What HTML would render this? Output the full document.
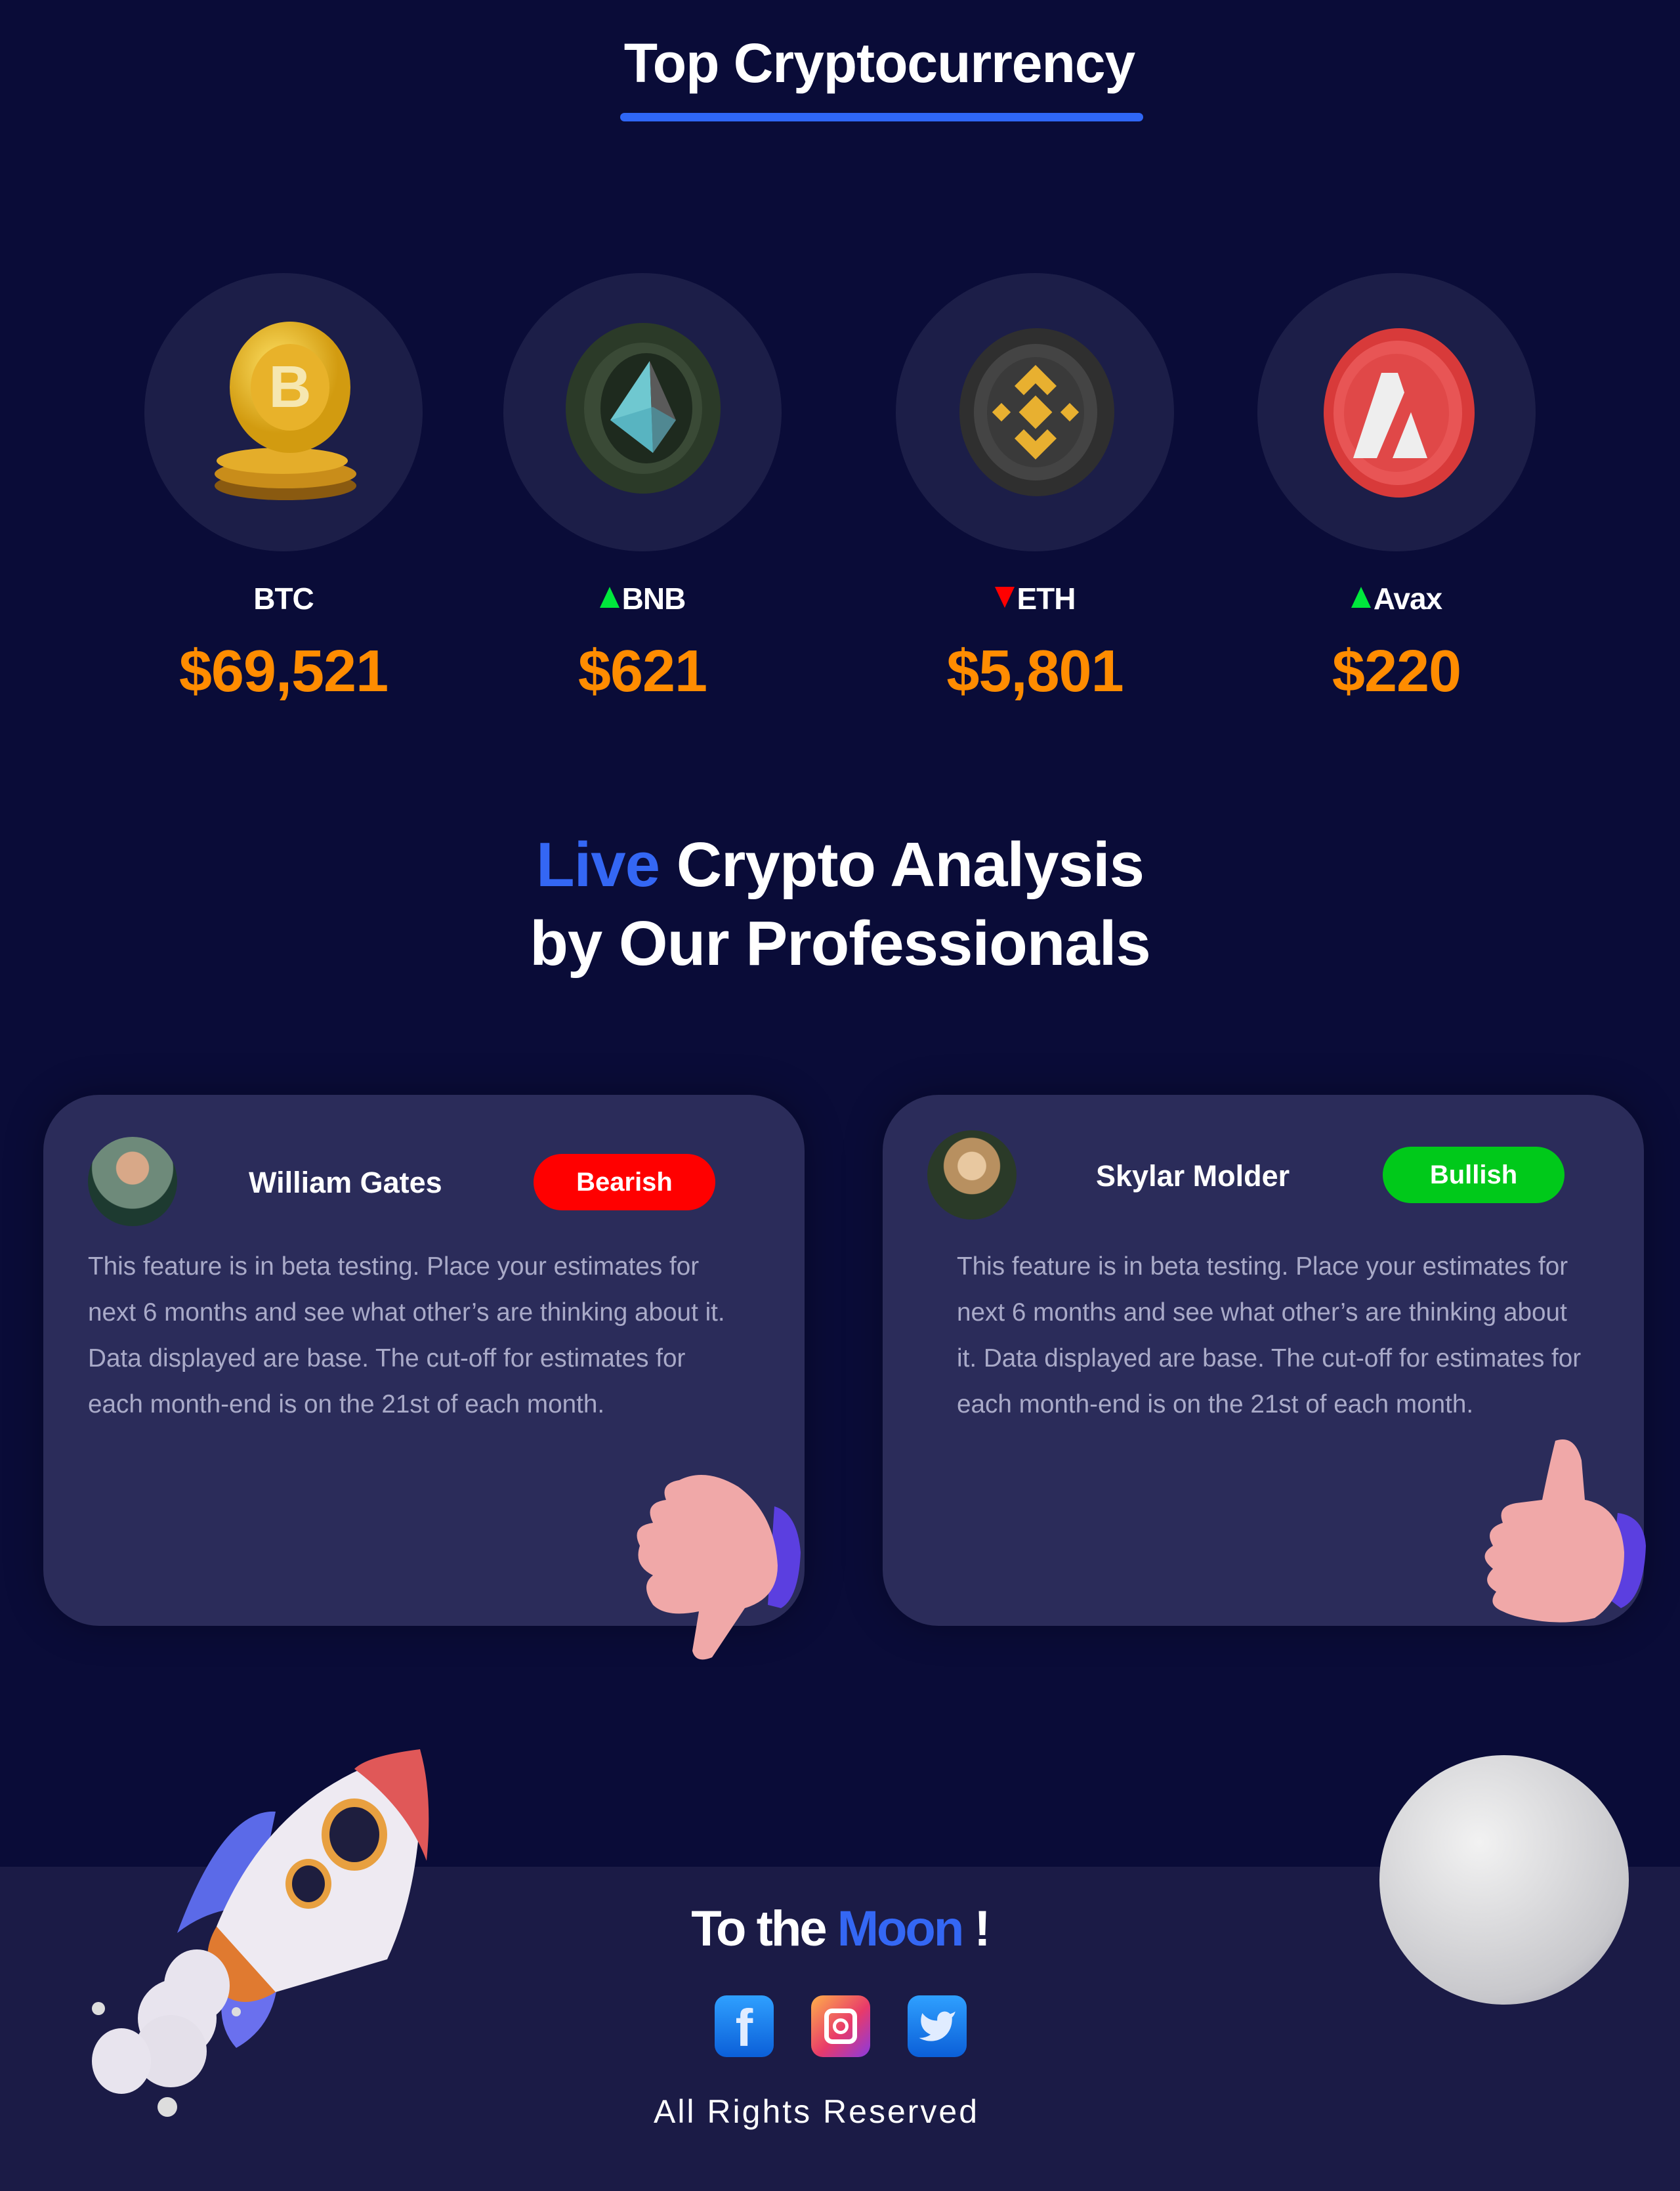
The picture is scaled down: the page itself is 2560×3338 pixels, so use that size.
<!DOCTYPE html>
<html><head><meta charset="utf-8"><style>
*{margin:0;padding:0;box-sizing:border-box}
body{width:2560px;height:3338px;background:#0a0c38;position:relative;overflow:hidden;font-family:"Liberation Sans",sans-serif;color:#fff}
.a{position:absolute}
.c{text-align:center;white-space:nowrap}
.circ{position:absolute;width:424px;height:424px;border-radius:50%;background:#1c1e48;top:416px}
.lab{position:absolute;top:885px;width:400px;font-weight:bold;font-size:46px;text-align:center;letter-spacing:-1px}
.price{position:absolute;top:972px;width:500px;font-weight:bold;font-size:90px;color:#ff8c00;text-align:center;letter-spacing:-1px}
.tri{display:inline-block;width:0;height:0;border-left:15px solid transparent;border-right:15px solid transparent;vertical-align:2px;margin-right:4px}
.up{border-bottom:32px solid #00e83c}
.dn{border-top:32px solid #ff0000}
.card{position:absolute;top:1668px;width:1160px;height:809px;border-radius:85px;background:#2b2c5a;box-shadow:0 0 60px rgba(0,0,0,.3)}
.name{position:absolute;font-weight:bold;font-size:45px;white-space:nowrap}
.pill{position:absolute;width:277px;height:86px;border-radius:43px;font-weight:bold;font-size:40px;text-align:center;line-height:86px}
.p{position:absolute;font-size:38.7px;line-height:70px;color:#a9aac8}
</style></head><body>

<div class="a c" style="left:0;width:2680px;top:48px;font-size:84px;font-weight:bold;letter-spacing:-1px">Top Cryptocurrency</div>
<div class="a" style="left:945px;top:172px;width:797px;height:13px;border-radius:7px;background:#2f67f6"></div>

<div class="circ" style="left:220px"></div>
<div class="circ" style="left:767px"></div>
<div class="circ" style="left:1365px"></div>
<div class="circ" style="left:1916px"></div>

<svg class="a" style="left:320px;top:490px" width="230" height="280" viewBox="0 0 230 280">
<defs><radialGradient id="g1" cx="40%" cy="35%"><stop offset="0" stop-color="#ffe266"/><stop offset="1" stop-color="#d29b10"/></radialGradient></defs>
<ellipse cx="115" cy="250" rx="108" ry="22" fill="#8a5a10"/><ellipse cx="115" cy="232" rx="108" ry="22" fill="#c98d1a"/><ellipse cx="110" cy="212" rx="100" ry="20" fill="#e4ad2a"/>
<ellipse cx="122" cy="100" rx="92" ry="100" fill="url(#g1)"/><ellipse cx="122" cy="100" rx="60" ry="66" fill="#e8b22a"/>
<text x="122" y="130" font-size="90" font-weight="bold" text-anchor="middle" fill="#f6e7b0" font-family="Liberation Sans">B</text></svg>
<svg class="a" style="left:860px;top:490px" width="240" height="265" viewBox="0 0 240 265">
<ellipse cx="120" cy="132" rx="118" ry="130" fill="#2b3a28"/><ellipse cx="120" cy="132" rx="90" ry="100" fill="#3a4a36"/><ellipse cx="125" cy="132" rx="70" ry="84" fill="#1e2a1e"/>
<polygon points="130,60 70,150 135,200" fill="#6fc8d0"/><polygon points="130,60 170,150 135,200" fill="#5a5a5a"/><polygon points="70,150 135,200 170,150 135,130" fill="#4aa6b8" opacity=".6"/></svg>
<svg class="a" style="left:1460px;top:498px" width="240" height="260" viewBox="0 0 240 260">
<ellipse cx="120" cy="130" rx="118" ry="128" fill="#2f2f2f"/><ellipse cx="118" cy="130" rx="94" ry="104" fill="#444"/><ellipse cx="118" cy="130" rx="74" ry="84" fill="#3a3a3a"/>
<g fill="#e8b030" transform="translate(118 130)"><rect x="-18" y="-18" width="36" height="36" transform="rotate(45)"/><polygon points="0,-72 32,-40 18,-26 0,-44 -18,-26 -32,-40"/><polygon points="0,72 32,40 18,26 0,44 -18,26 -32,40"/><rect x="-62" y="-10" width="20" height="20" transform="rotate(45 -52 0)"/><rect x="42" y="-10" width="20" height="20" transform="rotate(45 52 0)"/></g></svg>
<svg class="a" style="left:2010px;top:498px" width="240" height="262" viewBox="0 0 240 262">
<ellipse cx="122" cy="131" rx="115" ry="129" fill="#d83a3a"/><ellipse cx="120" cy="131" rx="98" ry="110" fill="#e85555"/><ellipse cx="118" cy="131" rx="80" ry="90" fill="#e04848"/>
<polygon points="95,70 120,70 130,100 88,200 52,200" fill="#eee"/><polygon points="140,130 165,200 112,200" fill="#eee"/></svg>

<div class="lab" style="left:232px">BTC</div>
<div class="lab" style="left:779px"><span class="tri up"></span>BNB</div>
<div class="lab" style="left:1377px"><span class="tri dn"></span>ETH</div>
<div class="lab" style="left:1928px"><span class="tri up"></span>Avax</div>
<div class="price" style="left:182px">$69,521</div>
<div class="price" style="left:729px">$621</div>
<div class="price" style="left:1327px">$5,801</div>
<div class="price" style="left:1878px">$220</div>

<div class="a c" style="left:0;width:2560px;top:1258px;font-size:96px;font-weight:bold;line-height:120px;letter-spacing:-1px"><span style="color:#3467f4">Live</span> Crypto Analysis<br>by Our Professionals</div>

<div class="card" style="left:66px"></div>
<div class="card" style="left:1345px"></div>

<div class="a" style="left:134px;top:1732px;width:136px;height:136px;border-radius:50%;background:radial-gradient(circle at 50% 35%,#d8a888 0 22%,#6e8a7a 23% 55%,#1d3a30 56%)"></div>
<div class="name" style="left:379px;top:1776px">William Gates</div>
<div class="pill" style="left:813px;top:1758px;background:#ff0000">Bearish</div>
<div class="p" style="left:134px;top:1895px;width:990px">This feature is in beta testing. Place your estimates for next 6 months and see what other’s are thinking about it. Data displayed are base. The cut-off for estimates for each month-end is on the 21st of each month.</div>

<div class="a" style="left:1413px;top:1722px;width:136px;height:136px;border-radius:50%;background:radial-gradient(circle at 50% 40%,#e8c8a0 0 20%,#b89060 21% 40%,#2a3a28 41%)"></div>
<div class="name" style="left:1670px;top:1766px">Skylar Molder</div>
<div class="pill" style="left:2107px;top:1747px;background:#00c91a">Bullish</div>
<div class="p" style="left:1458px;top:1895px;width:958px">This feature is in beta testing. Place your estimates for next 6 months and see what other’s are thinking about it. Data displayed are base. The cut-off for estimates for each month-end is on the 21st of each month.</div>

<svg class="a" style="left:965px;top:2235px" width="270" height="300" viewBox="0 0 270 300">
<path d="M215 60 Q250 70 255 130 Q252 200 225 215 L205 210Z" fill="#5b3fe0"/>
<path d="M70 20 Q110 0 160 30 Q215 70 220 150 Q220 200 170 215 L120 290 Q95 300 90 280 L100 220 Q50 230 30 210 Q10 180 30 165 Q0 150 10 120 Q-5 90 30 85 Q15 55 50 50 Q40 25 70 20Z" fill="#f0a8a8"/></svg>
<svg class="a" style="left:2250px;top:2185px" width="270" height="290" viewBox="0 0 270 290">
<path d="M215 120 Q255 125 258 170 Q255 250 220 265 L200 250Z" fill="#5b3fe0"/>
<path d="M120 10 Q150 0 160 40 L165 100 Q220 110 225 180 Q225 250 180 280 Q140 290 100 285 Q60 280 40 270 Q15 260 30 240 Q5 225 25 205 Q0 185 25 170 Q10 145 40 135 Q30 110 60 105 L100 100 Q110 50 120 10Z" fill="#f0a8a8"/></svg>

<div class="a" style="left:0;top:2844px;width:2560px;height:494px;background:#1b1b46"></div>
<div class="a c" style="left:0;width:2560px;top:2895px;font-size:76px;font-weight:bold;letter-spacing:-3px">To the <span style="color:#3467f4">Moon</span> !</div>
<div class="a" style="left:1089px;top:3040px;width:90px;height:94px;border-radius:18px;background:linear-gradient(#2fa0ff,#0b5fd8)"><div class="c" style="font-size:80px;font-weight:bold;line-height:100px;color:#e0ecff">f</div></div>
<div class="a" style="left:1236px;top:3040px;width:90px;height:94px;border-radius:18px;background:linear-gradient(135deg,#ffb04a,#e83a6a 55%,#8a3ae0)"><div class="a" style="left:20px;top:20px;width:50px;height:54px;border:7px solid #fff;border-radius:12px"></div><div class="a" style="left:33px;top:35px;width:24px;height:24px;border:5px solid #fff;border-radius:50%"></div></div>
<div class="a" style="left:1383px;top:3040px;width:90px;height:94px;border-radius:18px;background:linear-gradient(#2fa0ff,#0b5fd8)"><svg width="90" height="94" viewBox="0 0 24 24"><path transform="translate(4 4) scale(.67)" fill="#e0ecff" d="M23 3a10.9 10.9 0 0 1-3.14 1.53 4.48 4.48 0 0 0-7.86 3v1A10.66 10.66 0 0 1 3 4s-4 9 5 13a11.64 11.64 0 0 1-7 2c9 5 20 0 20-11.5a4.5 4.5 0 0 0-.08-.83A7.72 7.72 0 0 0 23 3z"/></svg></div>
<div class="a c" style="left:0;width:2488px;top:3188px;font-size:50px;letter-spacing:3px">All Rights Reserved</div>

<svg class="a" style="left:120px;top:2655px" width="560" height="580" viewBox="0 0 560 580">
<path d="M300 105 Q220 100 150 290 Q200 250 270 250Z" fill="#5b6ae8"/>
<path d="M300 300 Q320 420 240 465 Q200 420 230 340Z" fill="#6a70ee"/>
<path d="M520 10 Q530 200 470 330 L300 380 Q230 340 210 280 Q300 60 520 10Z" fill="#eeeaf2"/>
<path d="M520 10 Q440 20 420 40 Q500 100 530 180 Q540 80 520 10Z" fill="#e05858"/>
<ellipse cx="420" cy="140" rx="50" ry="55" fill="#e8a040"/><ellipse cx="420" cy="140" rx="38" ry="42" fill="#1e1e3e"/>
<ellipse cx="350" cy="215" rx="35" ry="38" fill="#e8a040"/><ellipse cx="350" cy="215" rx="25" ry="28" fill="#1e1e3e"/>
<path d="M210 280 Q180 330 215 380 Q250 410 300 380Z" fill="#e07a30"/>
<ellipse cx="180" cy="370" rx="50" ry="55" fill="#e8e4ee"/><ellipse cx="150" cy="420" rx="60" ry="60" fill="#e8e4ee"/><ellipse cx="140" cy="470" rx="55" ry="55" fill="#e4e0ea"/><ellipse cx="65" cy="485" rx="45" ry="50" fill="#e8e4ee"/>
<circle cx="30" cy="405" r="10" fill="#ddd"/><circle cx="240" cy="410" r="7" fill="#ddd"/><circle cx="135" cy="555" r="15" fill="#ddd"/></svg>
<div class="a" style="left:2102px;top:2674px;width:380px;height:380px;border-radius:50%;background:radial-gradient(circle at 40% 35%,#f2f2f2,#c8c8cc 70%,#9a98a8)"></div>
</body></html>
